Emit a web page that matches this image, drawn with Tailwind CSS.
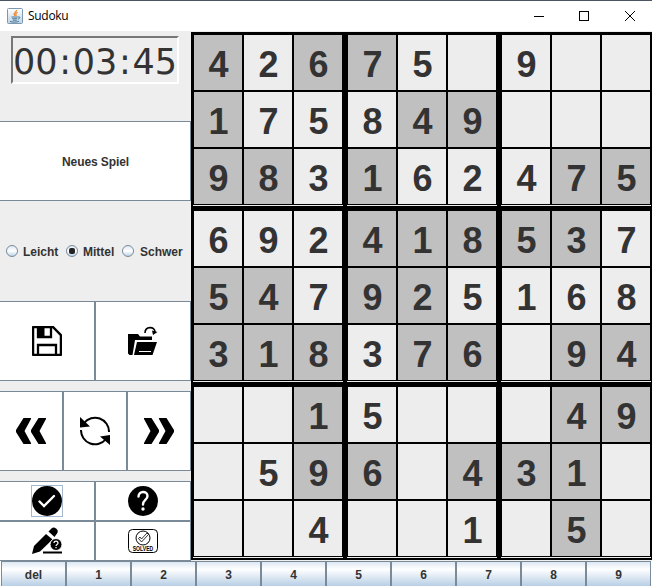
<!DOCTYPE html>
<html lang="de">
<head>
<meta charset="utf-8">
<title>Sudoku</title>
<script src="https://cdn.jsdelivr.net/npm/@tailwindcss/browser@4"></script>
</head>
<body class="w-[652px] h-[588px] overflow-hidden bg-white text-[#333333] font-['Liberation_Sans',Arial,sans-serif]">
<div class="flex flex-col w-[652px] h-[588px]">
  <header class="h-[31px] shrink-0 border-t border-[#4a5562] bg-white flex items-center text-black">
    <svg class="ml-[7px] w-4 h-4" viewBox="0 0 16 16">
      <defs><linearGradient id="g" x2="0" y2="1"><stop stop-color="#fff"/><stop offset="1" stop-color="#bdd3e4"/></linearGradient></defs>
      <rect x=".5" y=".5" width="15" height="15" rx="1" fill="url(#g)" stroke="#7b98ae"/>
      <path d="M9.6 2c.4 1.6-3 2.6-2.500 4 .2.700.7 1 .9 1.800M10.600 4.200C9 4.900 8.200 5.600 9 6.500c.4.500.2.900-.3 1.300" fill="none" stroke="#f08222" stroke-width="1.200"/>
      <path d="M4.500 9h6.300M5.300 10.700h5M5.800 12.200h4M3 13.400c2 1 7.500.9 9-.2M11 9c2.600-.7 2.300 1.700 0 2.200" fill="none" stroke="#4a7897"/>
    </svg>
    <span class="ml-[5px] text-[12px] leading-4 font-['Open_Sans','Noto_Sans',sans-serif] tracking-[-0.3px]">Sudoku</span>
    <svg class="ml-auto mr-4 w-[104px] h-[12px]" viewBox="0 0 104 12" fill="none" stroke="#000" shape-rendering="crispEdges">
      <path d="M2 6.500h10"/><rect x="47.500" y="1.500" width="9" height="9"/><path d="M93 1l10 10M103 1L93 11" shape-rendering="auto"/>
    </svg>
  </header>
  <main class="flex h-[530px] shrink-0 bg-[#eeeeee]">
    <aside class="w-[191px] shrink-0 flex flex-col">
      <div class="ml-[11px] mt-[5px] w-[168px] h-[48px] shrink-0 border-2 border-t-[#777777] border-l-[#777777] border-b-white border-r-white flex items-center justify-center pt-[4px] text-[35px] leading-none font-['DejaVu_Sans',sans-serif] whitespace-nowrap">
        <span>00</span><span class="w-[15.900px] text-center">:</span><span>03</span><span class="w-[15.900px] text-center">:</span><span>45</span>
      </div>
      <button class="mt-[37px] h-[80px] shrink-0 bg-white border border-l-0 border-[#7a8a99] text-[12px] font-bold pt-[2px] pl-px tracking-[-0.1px]">Neues Spiel</button>
      <div class="h-[100px] shrink-0 flex items-center pl-[6px] text-[12px] font-bold whitespace-nowrap">
        <label class="flex items-center gap-[5px] w-[60px]"><i class="size-3 rounded-full border border-[#7a8a99] bg-linear-to-b from-[#dce8f3] via-white to-[#bcd2e6]"></i><span class="pt-[2px]">Leicht</span></label>
        <label class="flex items-center gap-[5px] w-[56px]"><i class="size-3 rounded-full border border-[#7a8a99] bg-linear-to-b from-[#dce8f3] via-white to-[#bcd2e6] flex items-center justify-center"><b class="size-[6px] rounded-[2px] bg-[#222222]"></b></i><span class="pt-[2px]">Mittel</span></label>
        <label class="flex items-center gap-[6px]"><i class="size-3 rounded-full border border-[#7a8a99] bg-linear-to-b from-[#dce8f3] via-white to-[#bcd2e6]"></i><span class="pt-[2px]">Schwer</span></label>
      </div>
      <div class="h-[80px] shrink-0 flex text-black">
        <button class="w-[95px] bg-white border border-l-0 border-[#7a8a99] flex items-center justify-center">
          <svg class="w-[30px] h-[30px]" viewBox="0 0 30 30" fill="none" stroke="#000" stroke-width="2.300"><path d="M1.100 1.100h20l7.800 8v19.800H1.100z" stroke-linejoin="round"/><path d="M6 1v10h13V1M6 29V19h18v10"/><path d="M5 1h7.500v10H5z" fill="#000" stroke="none"/></svg>
        </button>
        <button class="w-[96px] bg-white border border-[#7a8a99] flex items-center justify-center">
          <svg class="w-[30px] h-[30px]" viewBox="0 0 30 30"><path d="M0 8h10l2 2.500h12v3.500H7L4.500 29H1.500L0 27.500z"/><path d="M9 16h20l-4.500 13H6z"/><path d="M11 25.500h12" stroke="#fff"/><path d="M17 7c0-7 10-7 10-1" fill="none" stroke="#000" stroke-width="1.600"/><path d="M24 4.500l5.500 1.500-4.500 3z"/></svg>
        </button>
      </div>
      <div class="mt-[10px] h-[80px] shrink-0 flex">
        <button class="w-[63px] bg-white border border-l-0 border-[#7a8a99] flex items-center justify-center">
          <svg class="w-[30px] h-[30px]" viewBox="0 0 30 30"><path d="M7.500 2h7q1 0 .5 1L8.500 15l6.500 12q.5 1-.5 1h-7L0 16v-2z"/><path d="M22.500 2h7q1 0 .5 1L23.500 15l6.500 12q.5 1-.5 1h-7L15 16v-2z"/></svg>
        </button>
        <button class="w-[64px] bg-white border border-[#7a8a99] flex items-center justify-center">
          <svg class="w-[30px] h-[30px]" viewBox="0 0 30 30"><path d="M4 7A14 14 0 0 1 29 16M26 23A14 14 0 0 1 1 14" fill="none" stroke="#000" stroke-width="2"/><path d="M0 1l10 9.500L0 11.500zM30 29l-10-8.500 10-1.500z"/></svg>
        </button>
        <button class="w-[64px] bg-white border border-[#7a8a99] flex items-center justify-center">
          <svg class="w-[30px] h-[30px]" viewBox="0 0 30 30"><g transform="matrix(-1 0 0 1 30 0)"><path d="M7.500 2h7q1 0 .5 1L8.500 15l6.500 12q.5 1-.5 1h-7L0 16v-2z"/><path d="M22.500 2h7q1 0 .5 1L23.500 15l6.500 12q.5 1-.5 1h-7L15 16v-2z"/></g></svg>
        </button>
      </div>
      <div class="mt-[10px] h-[40px] shrink-0 flex">
        <button class="w-[95px] bg-white border border-l-0 border-[#7a8a99] flex items-center justify-center">
          <span class="border border-[#a3b8cc]"><svg class="block w-[30px] h-[30px]" viewBox="0 0 30 30"><circle cx="15" cy="15" r="15"/><path d="M7.500 15.500l4.500 4.500 10-10" fill="none" stroke="#fff" stroke-width="2.400" stroke-linecap="round"/></svg></span>
        </button>
        <button class="w-[96px] bg-white border border-[#7a8a99] flex items-center justify-center">
          <svg class="w-[30px] h-[30px]" viewBox="0 0 30 30"><circle cx="15" cy="15" r="15"/><path d="M10.500 10.500c0-6 9-6 9-.5 0 4-4.500 4-4.500 8.500" fill="none" stroke="#fff" stroke-width="2.400" stroke-linecap="round"/><circle cx="15" cy="23" r="1.700" fill="#fff"/></svg>
        </button>
      </div>
      <div class="h-[40px] shrink-0 flex">
        <button class="w-[95px] bg-white border border-l-0 border-[#7a8a99] flex items-center justify-center">
          <svg class="w-[30px] h-[30px]" viewBox="0 0 30 30"><path d="M0 28l2-8L14 8l6.500 5.500L8 25.500z"/><path d="M16.500 5.500l3-3c1.500-1.500 3-1.500 4.500 0l1 1c1 1 1 2.500 0 4L22.500 11z"/><path d="M11 26.500h19" stroke="#000" stroke-width="2"/><circle cx="24" cy="18.500" r="6" stroke="#fff"/><path d="M22 17c0-2.600 4-2.400 4 0 0 1.500-2 1.300-2 3M24 21v1.300" fill="none" stroke="#fff" stroke-width="1.200"/></svg>
        </button>
        <button class="w-[96px] bg-white border border-[#7a8a99] flex items-center justify-center">
          <svg class="w-[30px] h-[30px] overflow-visible" viewBox="0 0 30 30" fill="none" stroke="#000"><rect x=".5" y="3.500" width="29" height="23" rx="4"/><circle cx="15" cy="12" r="7"/><path d="M10.500 12.500l3 3.500 7-7.500-1.500-1.500-5.500 6-1.500-2z" stroke-width=".8"/><text x="4.700" y="25" font-size="6.500" font-weight="bold" textLength="20.500" lengthAdjust="spacingAndGlyphs" fill="#000" stroke="none">SOLVED</text></svg>
        </button>
      </div>
    </aside>
    <section id="board" class="mt-px h-[528px] w-[461px] bg-black pt-[3px] pl-[2px] grid grid-cols-[150px_150px_150px] gap-x-[4px] auto-rows-[171px] gap-y-[5px] content-start"></section>
  </main>
  <footer id="keys" class="flex h-[25px] pl-px shrink-0 overflow-hidden text-[12px] font-bold"></footer>
</div>
<script>
// A trailing * marks a cell with the darker background.
const rows = [
  "4* 2 6* 7* 5 . 9 . .",
  "1* 7 5 8 4* 9* . . .",
  "9* 8* 3 1* 6 2 4 7* 5*",
  "6 9 2 4* 1* 8* 5* 3* 7",
  "5* 4* 7 9* 2* 5 1 6 8",
  "3* 1* 8* 3 7* 6* . 9* 4*",
  ". . 1* 5 . . . 4* 9*",
  ". 5 9* 6* . 4* 3* 1* .",
  ". . 4 . . 1 . 5* ."
].map(r => r.split(" "));
let html = "";
for (let b = 0; b < 9; b++) {
  html += '<div class="h-[171px] flex flex-col"><div class="bg-black h-[170px] w-[150px] pl-px grid grid-cols-[48px_48px_48px] auto-rows-[55px] gap-[2px]">';
  for (let i = 0; i < 9; i++) {
    const v = rows[Math.floor(b / 3) * 3 + Math.floor(i / 3)][(b % 3) * 3 + i % 3];
    html += '<div class="flex items-center justify-center pt-[4px] pl-px text-[36px] leading-none font-bold ' +
      (v.includes("*") ? "bg-[#c0c0c0]" : "bg-[#ededed]") + '">' + v.replace(/[*.]/g, "") + "</div>";
  }
  html += '</div><div class="h-px w-[150px] bg-[#eeeeee]"></div></div>';
}
document.getElementById("board").innerHTML = html;
document.getElementById("keys").innerHTML = ["del",1,2,3,4,5,6,7,8,9].map(k =>
  '<button class="w-[65px] h-[25px] shrink-0 border border-b-0 border-[#7a8a99] bg-linear-to-b from-[#dde8f3] via-white via-30% to-[#b8cfe5] pt-[2px] flex items-center justify-center">' + k + "</button>").join("");
</script>
</body>
</html>
